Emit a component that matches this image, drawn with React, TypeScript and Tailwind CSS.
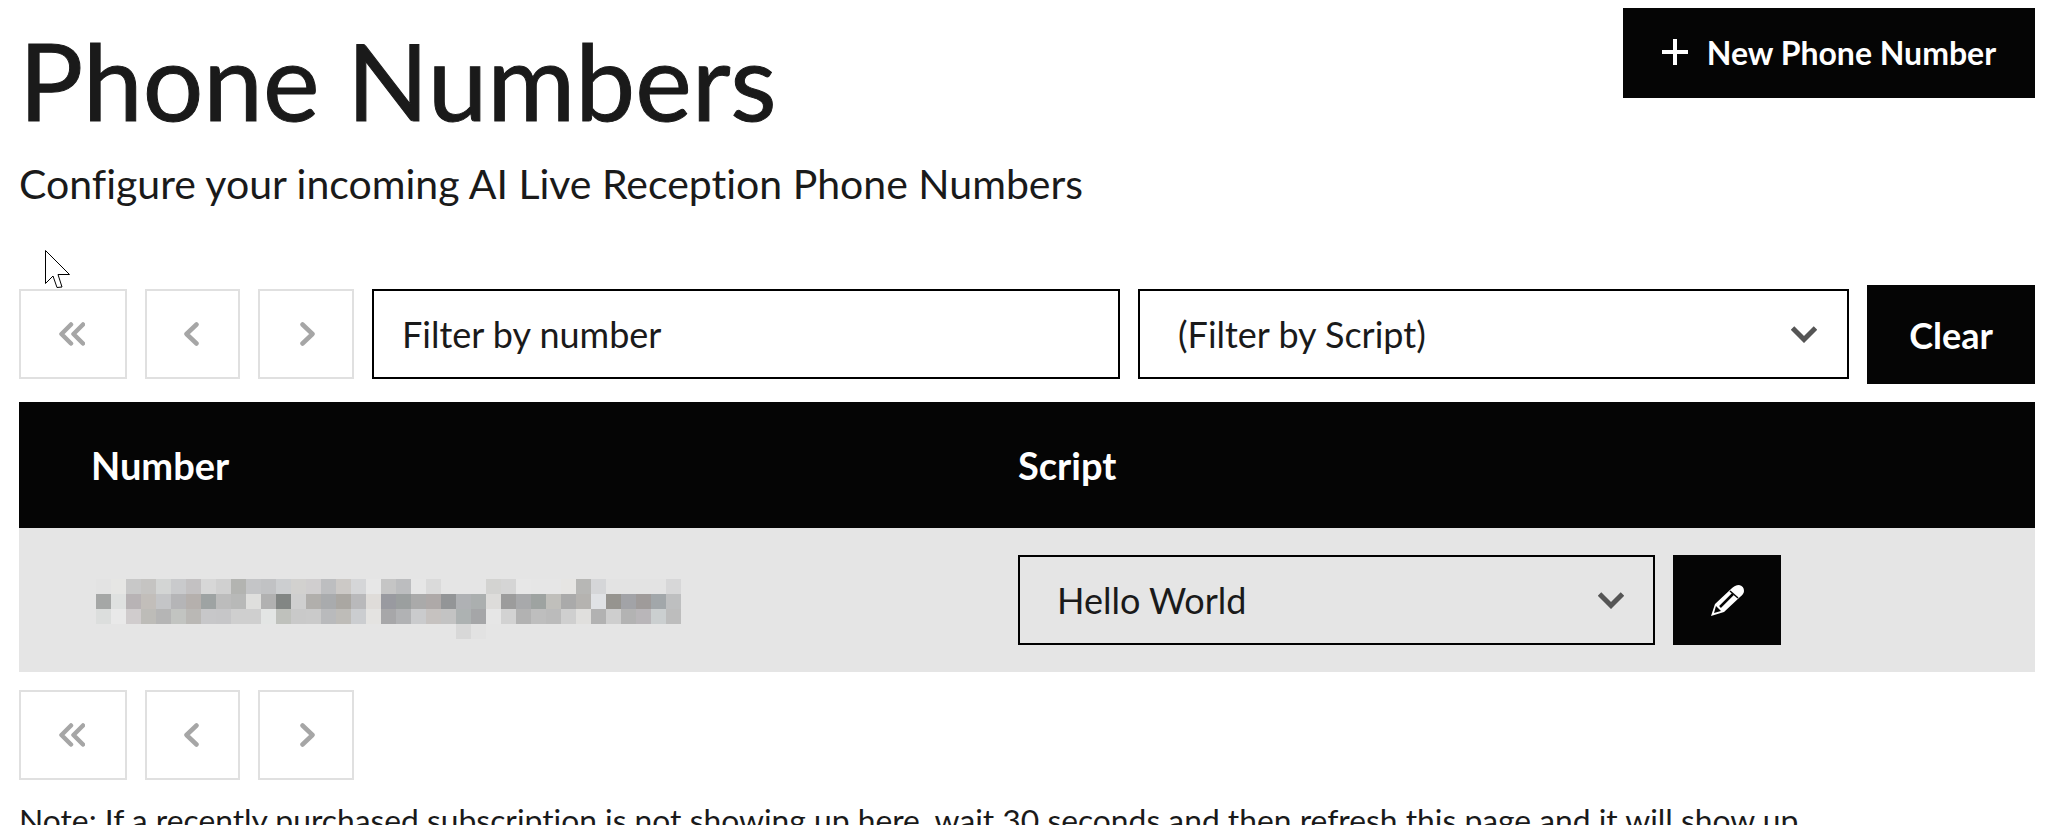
import React from "react";

const blur: string[][] = [
  ["e3e3e3","e6e6e4","c8c8c8","c5c4c2","d3d5d4","c9cacc","c3c1c2","d7d7d7","d0d0d0","b3b4b1","c4c5c7","c1c2c4","ccced0","d2d1cf","d0cecf","bdbec0","ccc9c6","d5d6d8","e7e7e7","c5c5c5","bcbdbf","e6e6e6","dadada","e5e5e5","e5e5e5","e5e5e5","d3d3d1","d5d5d5","e7e7e7","e6e6e6","e6e6e6","e6e5e3","b7b7b5","d5d6d8","e3e3e3","e3e3e3","e3e3e3","e3e3e3","d7d7d8"],
  ["a5a7a6","dfe1e0","b8b3b5","c2beba","c4c5c7","b5b5b7","b5b0ad","9ea3a3","bcbcbc","b8b9b8","dfdfdd","b1b1b1","828684","cfcfcf","b1afac","a9abad","aaa7a2","b9b9bb","dfdcd9","999aa0","9b9f9f","aaaaaa","aea9a8","939597","afb1b4","abafaf","dddcda","9c9c9c","a8a9ab","9ea3a1","c0bfbb","aaaaaa","b5b3b0","e0e2e5","96948f","a2a3a7","9f9b9a","a2a7aa","bebfc0"],
  ["dcdedd","e9e9e9","d0cccd","bdbcb8","b5b5b5","c2c4c1","bab8b5","c7c7c9","c6c6c8","cfcfcf","cfcfcf","e3e5e4","bfc1bc","c9c9c9","cacaca","b9babc","bebcb8","cbcdd0","e4e3e1","a7a7a9","b1b2b4","cacbcd","c6c2c0","c3c3c3","adb2b2","a5a6a8","e6e6e6","d2d2d2","b2b2b2","bebebe","bbbbbb","cfcfcf","e0dfdd","b2b2b2","cecece","b3b3b3","b9b6b9","cbcfd0","bdbdbd"],
];

function Chevron({ d, w }: { d: string; w: number }) {
  return (
    <svg width={w} height="24" viewBox={`0 0 ${w} 24`} fill="none" stroke="#a6a6a6" strokeWidth="4.5" strokeLinecap="round" strokeLinejoin="round">
      <path d={d} />
    </svg>
  );
}

function Pager() {
  return (
    <div className="flex gap-[18px]">
      <div className="flex h-[90px] w-[108px] items-center justify-center border-[2px] border-[#e0e0e0] pr-[2px]">
        <Chevron w={26} d="M12 2.5 L2.5 12 L12 21.5 M24 2.5 L14.5 12 L24 21.5" />
      </div>
      <div className="flex h-[90px] w-[95px] items-center justify-center border-[2px] border-[#e0e0e0] pr-[2px]">
        <Chevron w={15} d="M12.5 2.5 L2.5 12 L12.5 21.5" />
      </div>
      <div className="flex h-[90px] w-[96px] items-center justify-center border-[2px] border-[#e0e0e0] pl-[2px]">
        <Chevron w={15} d="M2.5 2.5 L12.5 12 L2.5 21.5" />
      </div>
    </div>
  );
}

function SelectArrow() {
  return (
    <svg width="26" height="17" viewBox="0 0 26 17" fill="none" stroke="#555555" strokeWidth="5" strokeLinejoin="miter">
      <path d="M1.5 2 L13 13.5 L24.5 2" />
    </svg>
  );
}

export default function App() {
  return (
    <div className="relative h-[825px] overflow-hidden bg-white pl-[19px] pr-[24px] font-['Lato','Noto_Sans',sans-serif] text-[#1a1a1a] [font-variant-ligatures:none]">
      <div className="flex h-[285px] items-start justify-between">
        <div>
          <h1 className="mt-[16px] text-[107px] leading-[128px] font-normal [-webkit-text-stroke:1px_#1a1a1a]">Phone Numbers</h1>
          <p className="mt-[14px] text-[41px] leading-[52px]">Configure your incoming AI Live Reception Phone Numbers</p>
        </div>
        <button className="mt-[8px] flex h-[90px] w-[412px] items-center justify-center gap-[19px] bg-[#050505] text-[32px] font-bold text-white">
          <svg className="-mt-[2px]" width="26" height="26" viewBox="0 0 26 26" stroke="white" strokeWidth="4"><path d="M13 0 V26 M0 13 H26" /></svg>
          New Phone Number
        </button>
      </div>

      <div className="flex items-start gap-[18px]">
        <div className="mt-[4px]"><Pager /></div>
        <div className="mt-[4px] flex h-[90px] w-[748px] items-center border-[2px] border-black pl-[28px] text-[36px]">Filter by number</div>
        <div className="mt-[4px] flex h-[90px] w-[711px] items-center justify-between border-[2px] border-black pl-[38px] pr-[30px] text-[36px]">
          (Filter by Script)
          <SelectArrow />
        </div>
        <button className="flex h-[99px] w-[168px] items-center justify-center bg-[#050505] text-[36px] font-bold text-white">Clear</button>
      </div>

      <div className="mt-[18px] flex h-[126px] items-center bg-[#050505] text-[38px] font-bold text-white">
        <div className="w-[999px] pl-[72px]">Number</div>
        <div>Script</div>
      </div>
      <div className="flex h-[144px] items-center bg-[#e5e5e5]">
        <div className="mt-[18px] w-[999px] pl-[77px]">
          <svg width="585" height="60" viewBox="0 0 585 60" shapeRendering="crispEdges">
            {blur.map((row, y) => row.map((c, x) => <rect key={`${x}-${y}`} x={x * 15} y={y * 15} width="15" height="15" fill={`#${c}`} />))}
            <rect x="360" y="45" width="15" height="15" fill="#d8d8d8" />
            <rect x="375" y="45" width="15" height="15" fill="#e2e2e2" />
          </svg>
        </div>
        <div className="flex h-[90px] w-[637px] items-center justify-between border-[2px] border-black pl-[37px] pr-[29px] text-[36px]">
          Hello World
          <SelectArrow />
        </div>
        <button className="ml-[18px] flex h-[90px] w-[108px] items-center justify-center bg-[#050505] text-white">
          <svg width="33" height="31" viewBox="0 0 33 31">
            <path fill="white" d="M0 31 L4 19 L20 4 Q24 0 28 0 Q33 1 33 6 Q33 9 29 12 L13 27 Z" />
            <path fill="none" stroke="#050505" strokeWidth="1.5" d="M19 6 L27 13" />
            <path fill="none" stroke="#050505" strokeWidth="2.5" d="M9 22 L22 9" />
            <path fill="#050505" d="M3 28 L5 21 L10 26 Z" />
          </svg>
        </button>
      </div>

      <div className="mt-[18px]"><Pager /></div>
      <p className="mt-[18px] text-[31.8px] leading-[44px]">Note: If a recently purchased subscription is not showing up here, wait 30 seconds and then refresh this page and it will show up.</p>

      <svg className="absolute left-[45px] top-[250px]" width="26" height="39" viewBox="0 0 26 39" fill="white" stroke="black" strokeWidth="1">
        <path d="M0.5 0.5 V33.5 L8 26 L12 37.5 L17 37 L13 24.5 L24.5 24.5 Z" />
      </svg>
    </div>
  );
}
